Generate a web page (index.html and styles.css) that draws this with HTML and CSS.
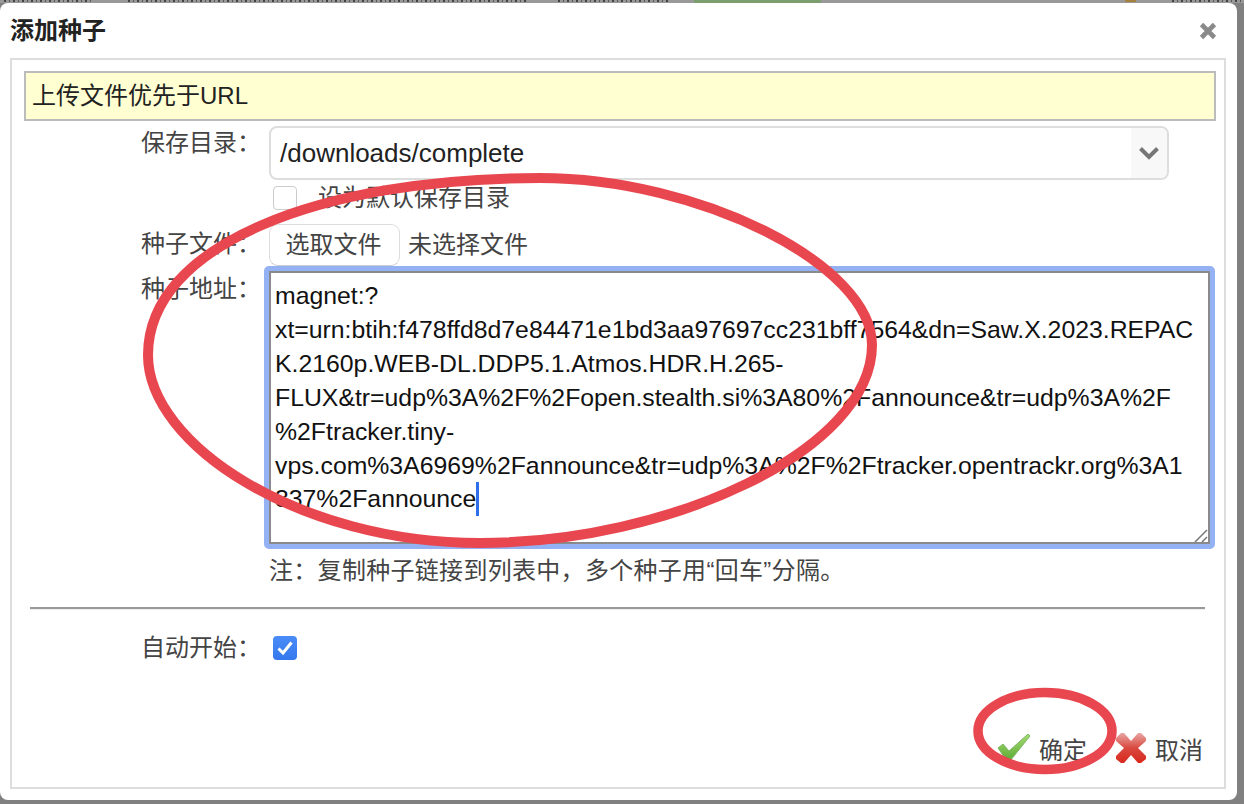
FILE: index.html
```html
<!DOCTYPE html>
<html lang="zh">
<head>
<meta charset="utf-8">
<title>添加种子</title>
<link rel="stylesheet" href="styles.css">
</head>
<body>
<div class="backdrop-strip">
  <span class="strip-frag strip-a"></span>
  <span class="strip-frag strip-b"></span>
  <span class="strip-frag strip-c"></span>
  <span class="bar"></span>
  <span class="strip-frag strip-d"></span>
  <span class="strip-frag strip-e"></span>
</div>
<div class="dialog">
  <header class="dialog-head">
    <h1 class="dialog-title">添加种子</h1>
    <svg class="close" width="20" height="20" viewBox="0 0 20 20"><path d="M3.5 3.5L16.5 16.5M16.5 3.5L3.5 16.5" stroke="#8a8a8a" stroke-width="4.6" fill="none"/></svg>
  </header>
  <div class="dialog-body">
    <div class="tip">上传文件优先于URL</div>
    <div class="form-row row-dir">
      <label class="label">保存目录：</label>
      <div class="field">
        <div class="select">
          <span class="select-value">/downloads/complete</span>
          <span class="select-arrow"><svg width="22" height="14" viewBox="0 0 22 14"><path d="M2.5 2.5L11 11L19.5 2.5" stroke="#777" stroke-width="4" fill="none"/></svg></span>
        </div>
        <div class="default-row">
          <span class="check"></span>
          <span class="default-text">设为默认保存目录</span>
        </div>
      </div>
    </div>
    <div class="form-row row-file">
      <label class="label">种子文件：</label>
      <div class="file-field">
        <span class="file-btn">选取文件</span>
        <span class="file-text">未选择文件</span>
      </div>
    </div>
    <div class="form-row row-url">
      <label class="label">种子地址：</label>
      <div class="field">
        <div class="textarea">magnet:?
xt=urn:btih:f478ffd8d7e84471e1bd3aa97697cc231bff7564&amp;dn=Saw.X.2023.REPAC
K.2160p.WEB-DL.DDP5.1.Atmos.HDR.H.265-
FLUX&amp;tr=udp%3A%2F%2Fopen.stealth.si%3A80%2Fannounce&amp;tr=udp%3A%2F
%2Ftracker.tiny-
vps.com%3A6969%2Fannounce&amp;tr=udp%3A%2F%2Ftracker.opentrackr.org%3A1
337%2Fannounce<span class="caret"></span><svg class="grip" width="16" height="16" viewBox="0 0 16 16"><path d="M2 14L14 2M9 14L14 9" stroke="#777" stroke-width="1.5" fill="none"/></svg></div>
        <p class="note">注：复制种子链接到列表中，多个种子用“回车”分隔。</p>
      </div>
    </div>
    <hr class="divider">
    <div class="form-row row-auto">
      <label class="label">自动开始：</label>
      <span class="check checked"><svg width="18" height="16" viewBox="0 0 18 16"><path d="M2.5 8.5L7 13L15.5 2.5" stroke="#fff" stroke-width="3" fill="none"/></svg></span>
    </div>
    <div class="actions">
      <span class="action action-ok">
        <svg width="34" height="30" viewBox="0 0 34 30"><defs><linearGradient id="ok" x1="0" y1="0" x2="0" y2="1"><stop offset="0" stop-color="#a6dc72"/><stop offset="1" stop-color="#5aa834"/></linearGradient></defs><path d="M1 15L6 11L12 18L31 1L33 3L13 28H10Z" fill="url(#ok)" stroke="#7fb667" stroke-width="1"/></svg>
        确定
      </span>
      <span class="action action-cancel">
        <svg width="32" height="32" viewBox="0 0 32 32"><defs><linearGradient id="no" x1="0" y1="0" x2="0" y2="1"><stop offset="0" stop-color="#e8a6a4"/><stop offset="0.5" stop-color="#d9493f"/><stop offset="1" stop-color="#d9281c"/></linearGradient></defs><path d="M1 6L6 1H9L16 9L23 1H26L31 6V9L23 16L31 24V27L26 31H23L16 23L9 31H6L1 27V24L9 16L1 9Z" fill="url(#no)"/></svg>
        取消
      </span>
    </div>
  </div>
</div>
<svg class="annotation" width="1244" height="804" viewBox="0 0 1244 804">
  <path d="M148 355C148 245 320 178 540 178C700 178 872 265 872 345C872 450 670 543 480 543C300 543 148 445 148 355Z" fill="none" stroke="#e9474f" stroke-width="10"/>
  <ellipse cx="1045" cy="731" rx="67" ry="38.5" fill="none" stroke="#e9474f" stroke-width="9.5"/>
</svg>
</body>
</html>
```

FILE: styles.css
```css
html, body { margin: 0; height: 804px; overflow: hidden; }
body {
  position: relative;
  width: 1244px;
  background: #808080;
  font-family: "Liberation Sans", "Noto Sans CJK SC", sans-serif;
  font-size: 24px;
  color: #444;
}
.backdrop-strip { height: 3px; background: #999; overflow: hidden; display: flex; }
.strip-frag { height: 2px; flex: none; background: repeating-linear-gradient(90deg, #444 0 2px, transparent 2px 5px, #555 5px 6px, transparent 6px 9px); }
.strip-a { width: 90px; margin-left: 4px; }
.strip-b { width: 398px; margin-left: 34px; }
.strip-c { width: 112px; margin-left: 32px; }
.bar { width: 127px; height: 3px; background: #7d9e6f; margin-left: 24px; flex: none; }
.strip-d { width: 11px; margin-left: 304px; background: #a5813f; }
.strip-e { width: 72px; margin-left: 36px; }
.dialog {
  box-sizing: border-box;
  width: 1237px;
  height: 797px;
  background: #fff;
  border-radius: 8px;
  padding-left: 10px;
  padding-right: 11px;
  display: flex;
  flex-direction: column;
}
.dialog-head { height: 55px; display: flex; align-items: center; justify-content: space-between; flex: none; box-sizing: border-box; }
.dialog-title { margin: 0; font-size: 24px; font-weight: 700; color: #222; line-height: 1; }
.close { margin-right: 8px; }
.dialog-body {
  flex: none;
  box-sizing: border-box;
  height: 731px;
  border: 2px solid #ddd;
  padding: 11px 9px 0 12px;
  display: flex;
  flex-direction: column;
}
.tip {
  box-sizing: border-box;
  height: 50px;
  width: 1192px;
  background: #ffffd2;
  border: 2px solid #bbb;
  padding-left: 6px;
  line-height: 46px;
  color: #222;
}
.form-row { display: flex; }
.label { width: 118px; margin-left: 117px; flex: none; white-space: nowrap; line-height: 34px; }
.field { flex: none; }
.row-dir { margin-top: 5px; height: 97px; }
.row-dir .label { margin-right: 10px; }
.select {
  box-sizing: border-box;
  width: 900px;
  height: 54px;
  border: 2px solid #ddd;
  border-radius: 8px;
  display: flex;
  justify-content: space-between;
  overflow: hidden;
}
.select-value { padding-left: 9px; line-height: 50px; color: #222; font-size: 26px; }
.select-arrow { width: 36px; background: #f8f8f8; display: flex; align-items: center; justify-content: center; }
.default-row { display: flex; align-items: center; margin-top: 6px; padding-left: 4px; height: 24px; }
.default-text { margin-bottom: 6px; }
.check {
  box-sizing: border-box;
  display: flex;
  align-items: center;
  justify-content: center;
  width: 24px;
  height: 24px;
  border: 1px solid #ccc;
  border-radius: 4px;
  background: #fff;
  margin-right: 21px;
  flex: none;
}
.checked { border: 0; background: linear-gradient(#4a8cf7, #3578ee); margin: 0; }
.row-file { height: 43px; }
.row-file .label { margin-right: 10px; line-height: 42px; }
.file-field { display: flex; align-items: center; height: 43px; }
.file-btn {
  box-sizing: border-box;
  width: 131px;
  height: 42px;
  border: 1px solid #ddd;
  border-bottom-color: #ccc;
  border-radius: 9px;
  text-align: center;
  line-height: 40px;
  padding-right: 2px;
}
.file-text { margin-left: 8px; margin-bottom: 4px; }
.row-url .label { margin-right: 5px; line-height: 46px; }
.textarea {
  position: relative;
  box-sizing: border-box;
  width: 951px;
  height: 283px;
  border: 5px solid #93b1f3;
  border-radius: 5px;
  padding: 8px 0 0 6px;
  white-space: pre;
  line-height: 33.9px;
  color: #111;
  font-size: 24.8px;
}
.textarea::before {
  content: "";
  position: absolute;
  inset: 0;
  border: 2px solid #8a8a8a;
  pointer-events: none;
}
.caret { display: inline-block; width: 3px; height: 34px; background: #2f6fec; vertical-align: -9px; }
.grip { position: absolute; right: 1px; bottom: 0; }
.note { margin: 5px 0 0 5px; line-height: 34px; letter-spacing: 0.3px; }
.divider { width: 1175px; margin: 19px 0 0 6px; height: 2px; border: 0; background: #999; box-shadow: 0 1px 0 #eee; flex: none; }
.row-auto { margin-top: 22px; height: 34px; align-items: center; }
.row-auto .label { margin-right: 14px; }
.actions { display: flex; justify-content: flex-end; margin-top: 63px; padding-right: 12px; gap: 29px; align-items: center; height: 40px; }
.action-cancel { margin-left: -1px; }
.action { display: flex; align-items: center; gap: 8px; }
.annotation { position: absolute; left: 0; top: 0; pointer-events: none; }
```
